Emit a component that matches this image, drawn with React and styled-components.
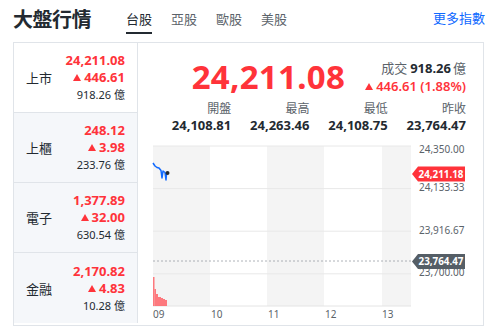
import React from "react";
import styled, { createGlobalStyle } from "styled-components";

const RED = "#ff333a";
const DARK = "#232a31";
const GRAY = "#5b636a";
const BORDER = "#e0e4e9";
const FONT = `"Noto Sans", "Noto Sans CJK TC", sans-serif`;

const Global = createGlobalStyle`
  html, body { margin: 0; padding: 0; background: #fff; }
  body { font-family: ${FONT}; color: ${DARK}; }
`;

const Page = styled.div`
  width: 471px;
  padding-left: 13px;
`;

const Header = styled.div`
  height: 42px;
  display: flex;
  align-items: flex-start;
`;

const Title = styled.h1`
  margin: 0;
  padding-top: 8px;
  font-size: 20px;
  line-height: 24px;
  font-weight: 700;
  color: ${DARK};
  letter-spacing: -0.5px;
`;

const Tabs = styled.nav`
  display: flex;
  gap: 19px;
  margin-left: 35px;
`;

const Tab = styled.div`
  padding-top: 10px;
  padding-bottom: 4px;
  line-height: 18px;
  font-size: 13px;
  color: ${(p) => (p.$active ? DARK : GRAY)};
  border-bottom: 2px solid ${(p) => (p.$active ? DARK : "transparent")};
`;

const More = styled.a`
  margin-left: auto;
  padding-top: 9px;
  line-height: 18px;
  font-size: 13px;
  color: #0f69ff;
  text-decoration: none;
  margin-right: -1px;
`;

const Box = styled.div`
  display: flex;
  border: 1px solid ${BORDER};
  height: 282px;
`;

const Sidebar = styled.div`
  width: 123px;
  border-right: 1px solid ${BORDER};
  align-self: flex-start;
  display: flex;
  flex-direction: column;
`;

const Row = styled.div`
  box-sizing: border-box;
  height: 70px;
  display: flex;
  align-items: center;
  justify-content: space-between;
  padding: 0 12px 0 12px;
  background: ${(p) => (p.$active ? "#fff" : "#f5f7fa")};
  border-bottom: ${(p) => (p.$last ? "none" : `1px solid ${BORDER}`)};
`;

const RowLabel = styled.span`
  font-size: 13px;
  color: ${DARK};
`;

const RowValues = styled.div`
  display: flex;
  flex-direction: column;
  align-items: flex-end;
  line-height: 17px;
`;

const RedValue = styled.span`
  display: flex;
  align-items: center;
  font-size: 13px;
  font-weight: 700;
  color: ${RED};
`;

const Volume = styled.span`
  font-size: 11px;
  color: ${DARK};
`;

const Up = styled.i`
  display: inline-block;
  width: 0;
  height: 0;
  border-left: ${(p) => p.$w}px solid transparent;
  border-right: ${(p) => p.$w}px solid transparent;
  border-bottom: ${(p) => p.$h}px solid ${RED};
  margin-right: ${(p) => p.$gap}px;
`;

const Main = styled.div`
  flex: 1;
  display: flex;
  flex-direction: column;
  padding: 0 17px 0 15px;
`;

const TopRow = styled.div`
  margin-top: 11px;
  height: 46px;
  display: flex;
  align-items: center;
  justify-content: flex-end;
  gap: 20px;
`;

const BigNumber = styled.div`
  font-size: 33px;
  line-height: 46px;
  font-weight: 700;
  color: ${RED};
  letter-spacing: 0.3px;
`;

const Summary = styled.div`
  display: flex;
  flex-direction: column;
  align-items: flex-end;
  line-height: 18px;
  font-size: 13px;
`;

const Turnover = styled.div`
  color: ${GRAY};
  b {
    color: ${DARK};
    font-weight: 700;
    margin: 0 2px 0 3px;
  }
`;

const Change = styled.div`
  display: flex;
  align-items: center;
  color: ${RED};
  font-weight: 600;
`;

const Stats = styled.div`
  display: grid;
  grid-template-columns: repeat(4, 1fr);
`;

const Stat = styled.div`
  display: flex;
  flex-direction: column;
  align-items: flex-end;
  line-height: 17px;
`;

const StatLabel = styled.span`
  font-size: 12px;
  color: ${GRAY};
`;

const StatValue = styled.span`
  font-size: 13px;
  font-weight: 700;
  color: ${DARK};
`;

const ChartSvg = styled.svg`
  display: block;
  margin-top: 6px;
  overflow: visible;
  font-family: ${FONT};
`;

const sideRows = [
  { name: "上市", price: "24,211.08", chg: "446.61", vol: "918.26 億", active: true },
  { name: "上櫃", price: "248.12", chg: "3.98", vol: "233.76 億" },
  { name: "電子", price: "1,377.89", chg: "32.00", vol: "630.54 億" },
  { name: "金融", price: "2,170.82", chg: "4.83", vol: "10.28 億" },
];

const stats = [
  ["開盤", "24,108.81"],
  ["最高", "24,263.46"],
  ["最低", "24,108.75"],
  ["昨收", "23,764.47"],
];

const PLOT_W = 258;
const TOP = 6;
const STEP = 42.6;
const BOTTOM = 166;

function PriceTag({ y, color, label }) {
  return (
    <g>
      <path d={`M259,${y} L265,${y - 7.5} H312 V${y + 7.5} H265 Z`} fill={color} />
      <text
        x="265.5"
        y={y + 3.6}
        fontSize="10"
        fontWeight="700"
        fill="#fff"
        textLength="45"
        lengthAdjust="spacingAndGlyphs"
      >
        {label}
      </text>
    </g>
  );
}

function Chart() {
  const bands = [
    [0, 57, true],
    [57, 114, false],
    [114, 171, true],
    [171, 229, false],
    [229, PLOT_W, true],
  ];
  const yLabels = ["24,350.00", "24,133.33", "23,916.67", "23,700.00"];
  const xLabels = [
    ["09", 0],
    ["10", 58],
    ["11", 115],
    ["12", 172],
    ["13", 229],
  ];
  const vol = [
    [0, 1.5, 137],
    [1.5, 3, 149],
    [3, 5, 154],
    [5, 8, 157],
    [8, 10, 158],
    [10, 12, 159],
    [12, 14, 160],
  ];
  return (
    <ChartSvg width="313" height="182" viewBox="0 0 313 182">
      {bands.map(([a, b, g], i) =>
        g ? <rect key={i} x={a} y={TOP} width={b - a} height={BOTTOM - TOP} fill="#f4f4f4" /> : null
      )}
      {[0, 1, 2, 3].map((k) => (
        <line key={k} x1="0" x2={PLOT_W} y1={TOP + k * STEP} y2={TOP + k * STEP} stroke="#e8e8e8" strokeWidth="1" />
      ))}
      <line x1="0" x2={PLOT_W} y1={BOTTOM} y2={BOTTOM} stroke="#e4e4e4" strokeWidth="1" />
      <line x1="0" x2={PLOT_W} y1="121" y2="121" stroke="#9aa0a6" strokeWidth="0.8" strokeDasharray="2 2" />
      {vol.map(([a, b, t], i) => (
        <rect key={i} x={a} y={t} width={b - a} height={BOTTOM - t} fill="#ff5a60" opacity="0.8" />
      ))}
      <polyline
        points="0,23 2,26 4,27.5 6,28 8,30.5 9,38 10,31 12,32.5 13,40 13.6,33 14.5,33"
        fill="none"
        stroke="#0f69ff"
        strokeWidth="1.5"
        strokeLinejoin="round"
      />
      <circle cx="14.5" cy="33" r="2" fill="#232a31" />
      {yLabels.map((t, k) => (
        <text key={t} x="266" y={(k === 0 ? 9 : TOP + k * STEP - 1) + 3.5} fontSize="10" fill={GRAY}>
          {t}
        </text>
      ))}
      {xLabels.map(([t, x]) => (
        <text key={t} x={x} y="177.5" fontSize="10" fill={GRAY}>
          {t}
        </text>
      ))}
      <PriceTag y={34} color={RED} label="24,211.18" />
      <PriceTag y={121.5} color="#555e66" label="23,764.47" />
    </ChartSvg>
  );
}

export default function App() {
  return (
    <Page>
      <Global />
      <Header>
        <Title>大盤行情</Title>
        <Tabs>
          <Tab $active>台股</Tab>
          <Tab>亞股</Tab>
          <Tab>歐股</Tab>
          <Tab>美股</Tab>
        </Tabs>
        <More href="#">更多指數</More>
      </Header>
      <Box>
        <Sidebar>
          {sideRows.map((r, i) => (
            <Row key={r.name} $active={r.active} $last={i === sideRows.length - 1}>
              <RowLabel>{r.name}</RowLabel>
              <RowValues>
                <RedValue>{r.price}</RedValue>
                <RedValue>
                  <Up $w={4} $h={7} $gap={3} />
                  {r.chg}
                </RedValue>
                <Volume>{r.vol}</Volume>
              </RowValues>
            </Row>
          ))}
        </Sidebar>
        <Main>
          <TopRow>
            <BigNumber>24,211.08</BigNumber>
            <Summary>
              <Turnover>
                成交<b>918.26</b>億
              </Turnover>
              <Change>
                <Up $w={4.5} $h={7} $gap={3} />
                446.61 (1.88%)
              </Change>
            </Summary>
          </TopRow>
          <Stats>
            {stats.map(([l, v]) => (
              <Stat key={l}>
                <StatLabel>{l}</StatLabel>
                <StatValue>{v}</StatValue>
              </Stat>
            ))}
          </Stats>
          <Chart />
        </Main>
      </Box>
    </Page>
  );
}
